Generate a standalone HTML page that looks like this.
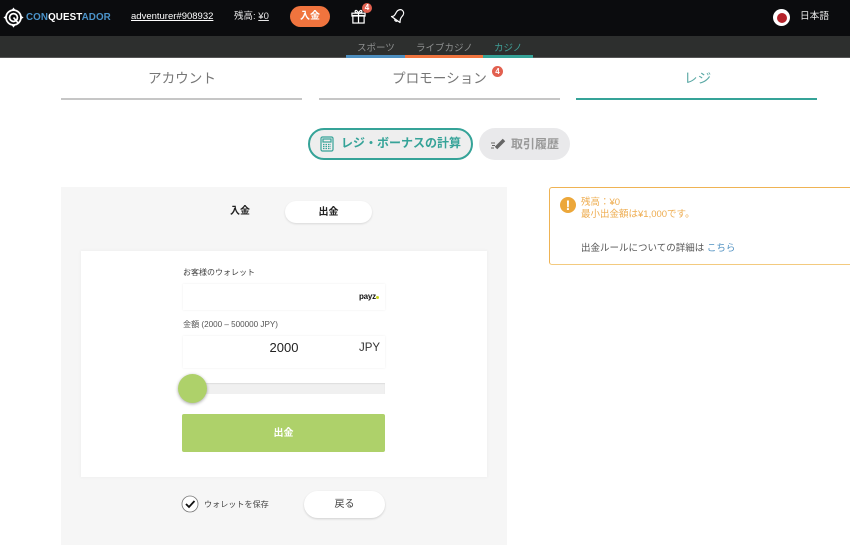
<!DOCTYPE html>
<html lang="ja">
<head>
<meta charset="utf-8">
<style>
html,body{margin:0;padding:0;background:#fff;}
body{width:850px;height:558px;overflow:hidden;position:relative;font-family:"Liberation Sans","Noto Sans CJK JP",sans-serif;}
.a{position:absolute;white-space:nowrap;}
.c{text-align:center;}
</style>
</head>
<body>
<div class="a" style="left:0;top:0;width:850px;height:36px;background:#0b0c0e"></div>
<div class="a" style="left:0;top:36px;width:850px;height:21px;background:#2d2f2e"></div>
<div class="a" style="left:0;top:57px;width:850px;height:1px;background:#555"></div>

<svg class="a" style="left:3px;top:7px" width="21" height="21" viewBox="0 0 24 24" fill="none" stroke="#fff">
<circle cx="12" cy="12" r="8.500" stroke-width="2"/>
<circle cx="12" cy="12" r="4.500" stroke-width="2"/>
<path d="M12 12l5 6" stroke-width="2"/>
<path d="M12 0.500l2.200 3h-4.400zM12 23.500l2.200-3h-4.400zM0.500 12l3-2.200v4.400zM23.500 12l-3-2.200v4.400z" fill="#fff" stroke="none"/>
</svg>
<div class="a" style="left:26px;top:11px;font-size:9.800px;line-height:14px;font-weight:700;letter-spacing:.1px;color:#4b93c9">CON<span style="color:#fff">QUEST</span>ADOR</div>

<div class="a" style="left:131px;top:10px;font-size:9.500px;line-height:14px;color:#fff;text-decoration:underline">adventurer#908932</div>
<div class="a" style="left:234px;top:10px;font-size:9.500px;line-height:14px;color:#e8e8e8">残高: <span style="text-decoration:underline">¥0</span></div>
<div class="a c" style="left:290px;top:6px;width:40px;height:21px;border-radius:11px;background:#f0743e;color:#fff;font-size:10px;font-weight:700;line-height:22px">入金</div>

<svg class="a" style="left:351px;top:8px" width="15" height="16" viewBox="0 0 16 17" fill="none" stroke="#fff" stroke-width="1.300">
<rect x="2" y="8" width="12" height="8"/><rect x="1" y="5.500" width="14" height="3"/>
<path d="M8 5.500V16M8 5.500C5 5.500 4 4 4.500 3S7 2.500 8 5.500C9 2.500 11 2 11.500 3S11 5.500 8 5.500"/>
</svg>
<div class="a c" style="left:362px;top:3px;width:10px;height:10px;border-radius:50%;background:#e2604f;color:#fff;font-size:8px;line-height:10px;font-weight:700">4</div>
<svg class="a" style="left:390px;top:8px" width="16" height="16" viewBox="0 0 16 16" fill="none" stroke="#fff" stroke-width="1.200" stroke-linejoin="round">
<path d="M1.500 8.500C4.500 8.500 5 6.500 6.500 4C8 1.500 11 1 12.500 2.500C14.500 4.500 13.500 7 12 8.500C10.500 10 10 12 10 14.500Z"/>
<path d="M4.500 11.500C5 13 6.300 13.600 7.500 13"/>
</svg>

<div class="a" style="left:773px;top:9px;width:17px;height:17px;border-radius:50%;background:#fff"></div>
<div class="a" style="left:776.500px;top:12.500px;width:10px;height:10px;border-radius:50%;background:#b5232b"></div>
<div class="a" style="left:800px;top:10px;font-size:9.700px;line-height:14px;color:#e8e8e8">日本語</div>

<div class="a" style="left:357px;top:42px;font-size:9.500px;line-height:13px;color:#8d8f8f">スポーツ</div>
<div class="a" style="left:416px;top:42px;font-size:9.500px;line-height:13px;color:#8d8f8f">ライブカジノ</div>
<div class="a" style="left:494px;top:42px;font-size:9.500px;line-height:13px;color:#3f9f97">カジノ</div>
<div class="a" style="left:346px;top:55px;width:59px;height:3px;background:#4d8fc0"></div>
<div class="a" style="left:405px;top:55px;width:78px;height:3px;background:#f0743e"></div>
<div class="a" style="left:483px;top:55px;width:50px;height:3px;background:#35a398"></div>

<div class="a" style="left:148px;top:69px;font-size:13.600px;line-height:20px;color:#777">アカウント</div>
<div class="a" style="left:392px;top:69px;font-size:13.600px;line-height:20px;color:#777">プロモーション</div>
<div class="a c" style="left:492px;top:66px;width:11px;height:11px;border-radius:50%;background:#e2604f;color:#fff;font-size:8px;line-height:11px;font-weight:700">4</div>
<div class="a" style="left:684px;top:69px;font-size:13.600px;line-height:20px;color:#5ba9a5">レジ</div>
<div class="a" style="left:61px;top:98px;width:241px;height:2px;background:#c6c6c6"></div>
<div class="a" style="left:319px;top:98px;width:241px;height:2px;background:#c6c6c6"></div>
<div class="a" style="left:576px;top:98px;width:241px;height:2px;background:#35a398"></div>

<div class="a" style="left:308px;top:128px;width:161px;height:28px;border:2px solid #35a398;border-radius:16px;background:#eeeeee"></div>
<svg class="a" style="left:320px;top:136px" width="14" height="16" viewBox="0 0 14 16" fill="none" stroke="#35a398" stroke-width="1.200">
<rect x="1" y="1" width="12" height="14" rx="1.500"/><rect x="3" y="3" width="8" height="3"/>
<path d="M3 8.500h8M3 10.500h8M3 12.500h8" stroke-dasharray="1.500 1"/>
</svg>
<div class="a" style="left:341px;top:135px;font-size:12px;line-height:16px;font-weight:700;color:#35a398">レジ・ボーナスの計算</div>

<div class="a" style="left:479px;top:128px;width:91px;height:32px;border-radius:16px;background:#e9e9eb"></div>
<svg class="a" style="left:490px;top:136px" width="16" height="15" viewBox="0 0 16 15" fill="none" stroke="#666">
<path d="M6 12L14 4" stroke-width="3.500"/>
<path d="M1 7h4M2 9.500h3M1 12h3" stroke-width="1"/>
</svg>
<div class="a" style="left:511px;top:136px;font-size:12px;line-height:16px;font-weight:700;color:#999">取引履歴</div>

<div class="a" style="left:61px;top:187px;width:446px;height:358px;background:#f6f6f6"></div>
<div class="a c" style="left:225px;top:205px;width:30px;font-size:10px;line-height:14px;font-weight:700;color:#222">入金</div>
<div class="a c" style="left:285px;top:201px;width:87px;height:22px;border-radius:11px;background:#fff;box-shadow:0 1px 2px rgba(0,0,0,.12);font-size:10px;line-height:23px;font-weight:700;color:#222">出金</div>

<div class="a" style="left:81px;top:251px;width:406px;height:226px;background:#fff;box-shadow:0 0 4px rgba(0,0,0,.05)"></div>

<div class="a" style="left:183px;top:266px;font-size:8px;line-height:13px;color:#444">お客様のウォレット</div>
<div class="a" style="left:183px;top:284px;width:202px;height:26px;box-shadow:0 0 2px rgba(0,0,0,.08);background:#fff"></div>
<div class="a" style="left:359px;top:291px;font-size:8px;line-height:11px;font-weight:700;color:#111;letter-spacing:-.2px">payz</div>
<div class="a" style="left:376px;top:296px;width:3px;height:3px;border-radius:50%;background:#c8d21e"></div>

<div class="a" style="left:183px;top:318px;font-size:8.100px;line-height:13px;color:#555">金額 (2000 – 500000 JPY)</div>
<div class="a" style="left:183px;top:336px;width:202px;height:32px;box-shadow:0 0 2px rgba(0,0,0,.08);background:#fff"></div>
<div class="a c" style="left:183px;top:340px;width:202px;font-size:13px;line-height:16px;color:#222">2000</div>
<div class="a" style="left:359px;top:340px;font-size:11.500px;line-height:16px;color:#333">JPY</div>

<div class="a" style="left:192px;top:383px;width:193px;height:11px;background:#f0f0f0;box-shadow:inset 0 1px 1px rgba(0,0,0,.08)"></div>
<div class="a" style="left:178px;top:374px;width:29px;height:29px;border-radius:50%;background:#aed16a;box-shadow:0 1px 3px rgba(0,0,0,.35)"></div>

<div class="a c" style="left:182px;top:414px;width:203px;height:38px;border-radius:2px;background:#aed16a;color:#fff;font-size:10px;font-weight:700;line-height:40px">出金</div>

<svg class="a" style="left:181px;top:495px" width="18" height="18" viewBox="0 0 18 18" fill="none">
<circle cx="9" cy="9" r="8" fill="#fff" stroke="#777" stroke-width=".8"/>
<path d="M5 9l3 3 5.500-6" stroke="#111" stroke-width="1.800"/>
</svg>
<div class="a" style="left:204px;top:498px;font-size:8.100px;line-height:14px;color:#444">ウォレットを保存</div>
<div class="a c" style="left:304px;top:491px;width:81px;height:27px;border-radius:14px;background:#fff;box-shadow:0 1px 2px rgba(0,0,0,.16);font-size:10px;line-height:27px;color:#444">戻る</div>

<div class="a" style="left:549px;top:187px;width:310px;height:76px;border:1px solid #efb354;border-bottom-color:#f3ca7f;border-radius:3px;box-sizing:content-box"></div>
<div class="a c" style="left:560px;top:197px;width:16px;height:16px;border-radius:50%;background:#eca73a;color:#fff;font-size:14px;line-height:16px;font-weight:700">!</div>
<div class="a" style="left:581px;top:197px;font-size:9.500px;line-height:12px;color:#eeac4f">残高：¥0<br>最小出金額は¥1,000です。</div>
<div class="a" style="left:581px;top:242px;font-size:9.500px;line-height:14px;color:#555">出金ルールについての詳細は <span style="color:#4d8fc0">こちら</span></div>
</body>
</html>
